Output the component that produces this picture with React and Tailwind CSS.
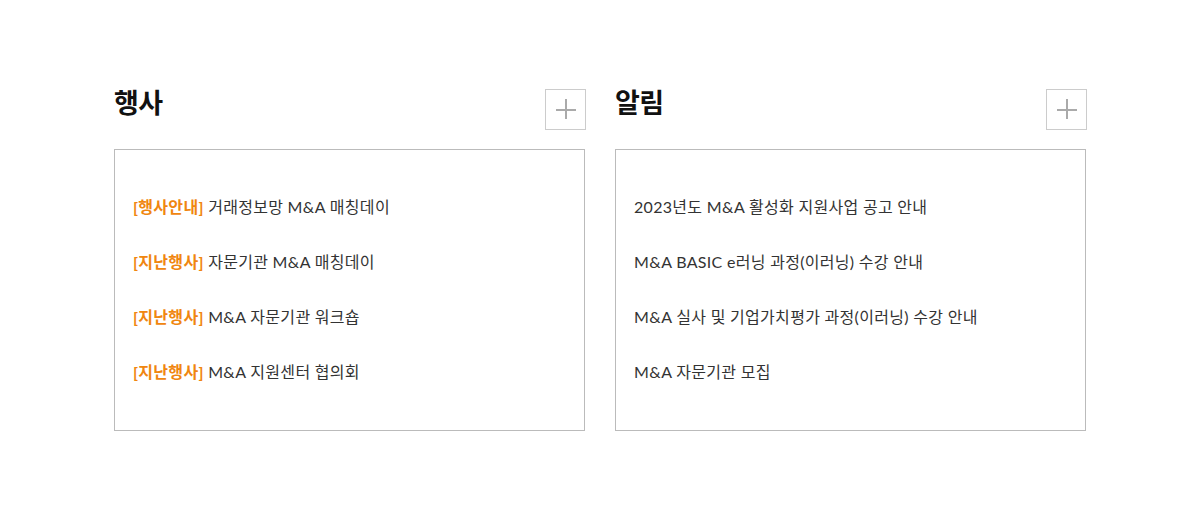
import React from "react";

const events = [
  { tag: "[행사안내]", title: "거래정보망 M&A 매칭데이" },
  { tag: "[지난행사]", title: "자문기관 M&A 매칭데이" },
  { tag: "[지난행사]", title: "M&A 자문기관 워크숍" },
  { tag: "[지난행사]", title: "M&A 지원센터 협의회" },
];

const notices = [
  "2023년도 M&A 활성화 지원사업 공고 안내",
  "M&A BASIC e러닝 과정(이러닝) 수강 안내",
  "M&A 실사 및 기업가치평가 과정(이러닝) 수강 안내",
  "M&A 자문기관 모집",
];

function MoreButton() {
  return (
    <button className="relative w-[41px] h-[41px] border border-[#cccccc] bg-white mt-[2px] mr-[-1px]">
      <span className="absolute left-[10px] top-[19px] w-[20px] h-[2px] bg-[#aaaaaa]" />
      <span className="absolute left-[19px] top-[9px] w-[2px] h-[20px] bg-[#aaaaaa]" />
    </button>
  );
}

function Board({ title, children }) {
  return (
    <section className="w-[471px]">
      {/* Header */}
      <div className="flex justify-between items-start h-[42px]">
        <h2 className="text-[27px] font-bold text-[#111] leading-[30px] pt-[1px] tracking-[-0.5px]">{title}</h2>
        <MoreButton />
      </div>

      {/* List */}
      <ul className="mt-[20px] border border-[#bbbbbb] px-[18px] pt-[29px] pb-[31px]">
        {children}
      </ul>
    </section>
  );
}

export default function App() {
  return (
    <div
      className="bg-white min-h-[511px] pt-[87px] text-[#333]"
      style={{ fontFamily: "Lato, 'Noto Sans CJK KR', sans-serif" }}
    >
      <div className="w-[972px] mx-auto flex gap-[30px]">
        <Board title="행사">
          {events.map((e, i) => (
            <li key={i} className="h-[55px] flex items-center text-[16px] tracking-[0.3px] whitespace-pre">
              <span className="text-[#f0860f] font-bold">{e.tag}</span>
              <span> {e.title}</span>
            </li>
          ))}
        </Board>
        <Board title="알림">
          {notices.map((n, i) => (
            <li key={i} className="h-[55px] flex items-center text-[16px] tracking-[0.3px]">
              {n}
            </li>
          ))}
        </Board>
      </div>
    </div>
  );
}
